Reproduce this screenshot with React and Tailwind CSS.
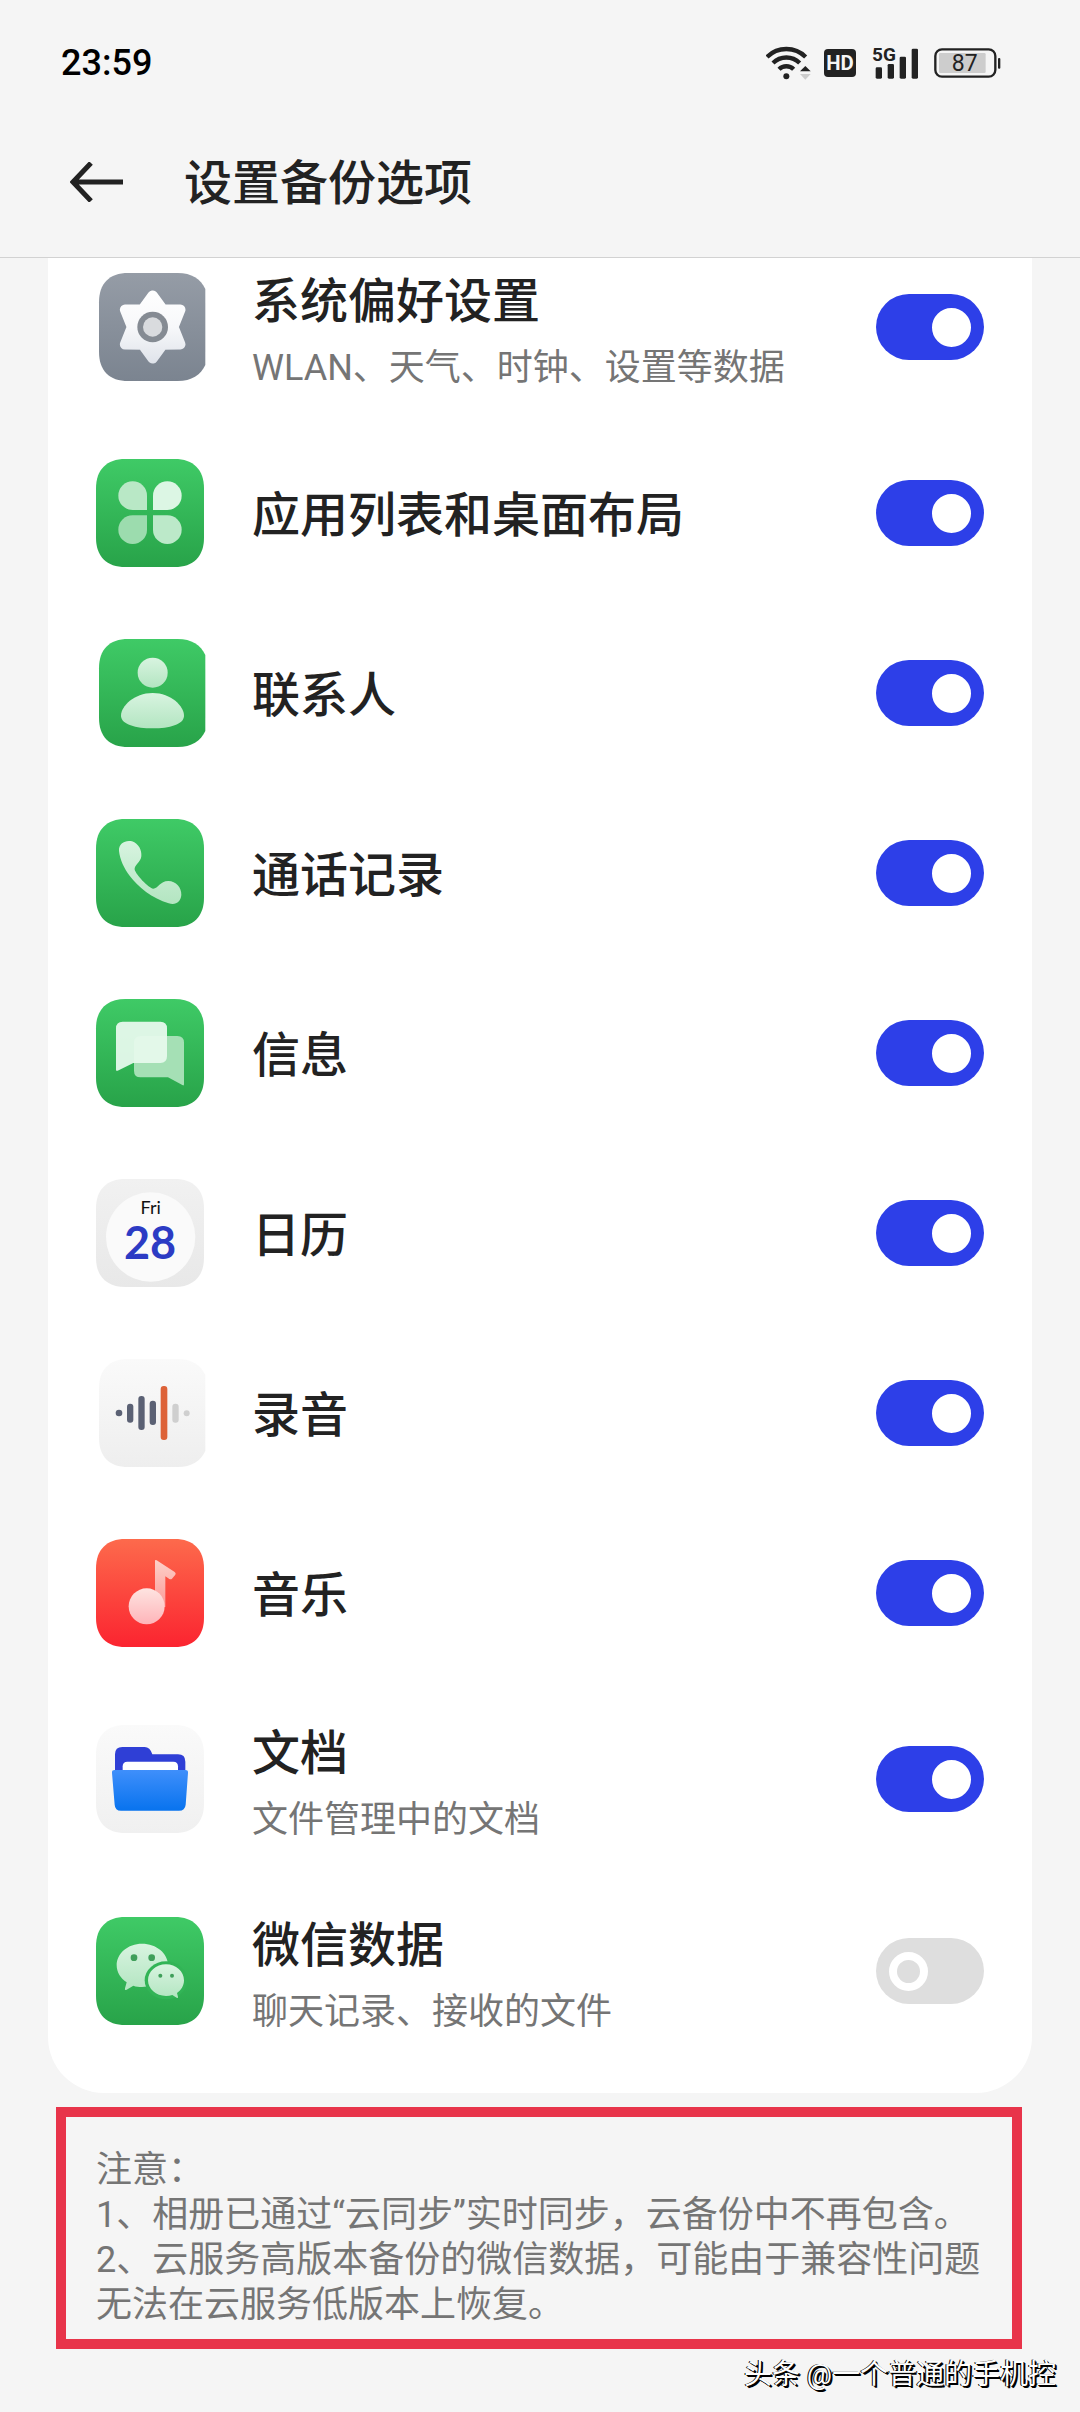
import React from "react";

/* App icons share a 324-unit canvas: three units to one CSS pixel. */
function Tile({ id, from, to, inset = false, children }) {
  return (
    <svg viewBox="0 0 324 324" className="size-[108px] shrink-0 overflow-visible" aria-hidden="true">
      <defs>
        <linearGradient id={id} x1="0" y1="0" x2="0" y2="1">
          <stop offset="0" stopColor={from} />
          <stop offset="1" stopColor={to} />
        </linearGradient>
        <linearGradient id={id + "-mint"} x1="0" y1="0" x2="0" y2="1">
          <stop offset="0" stopColor="#d8f4e0" />
          <stop offset="1" stopColor="#b3e5c1" />
        </linearGradient>
      </defs>
      {inset ? (
        <path
          d="M97 0H245C287 0 314 18 328 48V276C314 306 287 324 245 324H97C39 324 9 292 9 236V88C9 32 39 0 97 0Z"
          fill={`url(#${id})`}
        />
      ) : (
        <path
          d="M88 0H236C292 0 324 32 324 88V236C324 292 292 324 236 324H88C32 324 0 292 0 236V88C0 32 32 0 88 0Z"
          fill={`url(#${id})`}
        />
      )}
      {children}
    </svg>
  );
}

const GREEN = { from: "#3fca66", to: "#28a349" };

const SettingsIcon = () => (
  <Tile id="settings" from="#959ca6" to="#7b8490" inset>
    <defs>
      <linearGradient id="gear" gradientUnits="userSpaceOnUse" x1="0" y1="52" x2="0" y2="272">
        <stop offset="0" stopColor="#ffffff" />
        <stop offset="0.5" stopColor="#f7f8fa" />
        <stop offset="1" stopColor="#dfe3ea" />
      </linearGradient>
    </defs>
    <path
      d="M170 68L200 109L253 110L232 162L253 214L200 215L170 256L140 215L87 214L108 162L87 110L140 109Z"
      fill="url(#gear)"
      stroke="url(#gear)"
      strokeWidth="31"
      strokeLinejoin="round"
    />
    <circle cx="170" cy="162" r="46" fill="#858b93" />
    <circle cx="170" cy="162" r="29" fill="#d9dbde" />
  </Tile>
);

const AppsIcon = () => (
  <Tile id="apps" {...GREEN}>
    <path d="M153 153H110A43 43 0 1 1 153 110Z" fill="#b9e8c6" />
    <path d="M171 153V110A43 43 0 1 1 214 153Z" fill="#dcf6e4" />
    <path d="M153 169V212A43 43 0 1 1 110 169Z" fill="#9cdcae" />
    <path d="M171 169H214A43 43 0 1 1 171 212Z" fill="#bce9c9" />
  </Tile>
);

const ContactsIcon = () => (
  <Tile id="contacts" {...GREEN} inset>
    <circle cx="170" cy="101" r="45" fill="url(#contacts-mint)" />
    <path
      d="M170 162C226 162 264 202 264 230C264 256 220 268 170 268C120 268 75 256 75 230C75 202 114 162 170 162Z"
      fill="url(#contacts-mint)"
    />
  </Tile>
);

const PhoneIcon = () => (
  <Tile id="phone" {...GREEN}>
    <path
      d="M69 96C67 72 90 62 108 67C128 73 138 95 136 112C134 131 114 138 116 152C120 166 156 206 172 209C186 209 192 186 217 186C240 186 257 206 256 228C254 249 240 259 218 253C170 240 124 202 102 172C84 148 72 122 69 96Z"
      fill="url(#phone-mint)"
    />
  </Tile>
);

const MessagesIcon = () => (
  <Tile id="messages" {...GREEN}>
    <path
      d="M134 111H244Q264 111 264 131V256Q264 261 259 258L216 235H134Q114 235 114 215V131Q114 111 134 111Z"
      fill="#a5e0b5"
    />
    <path
      d="M80 68H193Q213 68 213 88V172Q213 192 193 192H112L65 215Q60 217 60 212V88Q60 68 80 68Z"
      fill="#e6f9ec"
      fillOpacity="0.95"
    />
  </Tile>
);

const CalendarIcon = () => (
  <Tile id="calendar" from="#f1f1f1" to="#e8e8e8">
    <circle cx="164" cy="174" r="134" fill="#fafafa" />
    <text x="164" y="106" textAnchor="middle" fontFamily="Lato, sans-serif" fontSize="54" fill="#111111">
      Fri
    </text>
    <text x="162" y="240" textAnchor="middle" fontFamily="Lato, sans-serif" fontSize="135" fontWeight="700" fill="#2c3bc4">
      28
    </text>
  </Tile>
);

const RecorderIcon = () => (
  <Tile id="recorder" from="#fafafa" to="#eeeeee" inset>
    <g fill="#5b6174">
      <circle cx="69" cy="162" r="10" />
      <rect x="93" y="134" width="19" height="57" rx="9" />
      <rect x="127" y="111" width="19" height="102" rx="9" />
      <rect x="161" y="125" width="19" height="73" rx="9" />
    </g>
    <rect x="194" y="81" width="20" height="162" rx="9" fill="#dd6238" />
    <g fill="#cfcfcf">
      <rect x="229" y="134" width="19" height="57" rx="9" />
      <circle cx="272" cy="163" r="9" />
    </g>
  </Tile>
);

const MusicIcon = () => (
  <Tile id="music" from="#fd6a4c" to="#fb2430">
    <defs>
      <linearGradient id="music-head" x1="0" y1="0" x2="0" y2="1">
        <stop offset="0" stopColor="#fee4e1" />
        <stop offset="1" stopColor="#feb4b9" />
      </linearGradient>
      <linearGradient id="music-stem" x1="0" y1="0" x2="0" y2="1">
        <stop offset="0" stopColor="#fdd0c8" />
        <stop offset="1" stopColor="#fc9a98" />
      </linearGradient>
    </defs>
    <path d="M177 66Q177 61 182 64L236 99Q241 103 238 107L228 119Q225 122 220 120L208 112V204H177Z" fill="url(#music-stem)" />
    <circle cx="152" cy="202" r="54" fill="url(#music-head)" />
  </Tile>
);

const FilesIcon = () => (
  <Tile id="files" from="#fafafa" to="#f0f0f0">
    <defs>
      <linearGradient id="files-front" x1="0" y1="0" x2="0" y2="1">
        <stop offset="0" stopColor="#3f8ffb" />
        <stop offset="1" stopColor="#0873ee" />
      </linearGradient>
    </defs>
    <path d="M57 150V88Q57 66 79 66H146Q162 66 169 88H246Q268 88 268 110V150Z" fill="#2f3fd6" />
    <path d="M80 150V124Q80 110 94 110H232Q246 110 246 124V150Z" fill="#ffffff" />
    <path d="M56 135H268Q277 135 276 144L269 239Q267 257 249 257H75Q57 257 56 239L48 144Q47 135 56 135Z" fill="url(#files-front)" />
  </Tile>
);

const WeChatIcon = () => (
  <Tile id="wechat" {...GREEN}>
    <path
      d="M138 80C181 80 216 109 216 145C216 181 181 210 138 210C129 210 120 209 112 206L92 218Q85 222 87 214L92 196C74 184 62 166 62 145C62 109 96 80 138 80Z"
      fill="url(#wechat-mint)"
    />
    <ellipse cx="210" cy="190" rx="64" ry="57" fill="#32b456" />
    <path
      d="M210 142C240 142 264 163 264 190C264 206 256 219 243 228L246 240Q246 245 242 242L229 234C223 236 217 237 210 237C180 237 156 216 156 190C156 163 180 142 210 142Z"
      fill="url(#wechat-mint)"
    />
    <g fill="#3f9f5a">
      <circle cx="114" cy="122" r="10" />
      <circle cx="167" cy="122" r="10" />
      <circle cx="193" cy="176" r="6" />
      <circle cx="228" cy="176" r="6" />
    </g>
  </Tile>
);

const OPTIONS = [
  { key: "system", title: "系统偏好设置", note: "WLAN、天气、时钟、设置等数据", Icon: SettingsIcon, on: true },
  { key: "layout", title: "应用列表和桌面布局", Icon: AppsIcon, on: true },
  { key: "contacts", title: "联系人", Icon: ContactsIcon, on: true },
  { key: "calls", title: "通话记录", Icon: PhoneIcon, on: true },
  { key: "sms", title: "信息", Icon: MessagesIcon, on: true },
  { key: "calendar", title: "日历", Icon: CalendarIcon, on: true },
  { key: "recordings", title: "录音", Icon: RecorderIcon, on: true },
  { key: "music", title: "音乐", Icon: MusicIcon, on: true },
  { key: "files", title: "文档", note: "文件管理中的文档", Icon: FilesIcon, on: true },
  { key: "wechat", title: "微信数据", note: "聊天记录、接收的文件", Icon: WeChatIcon, on: false },
];

function OptionRow({ title, note, Icon, on }) {
  return (
    <li>
      <label className={`flex items-center gap-12 px-12 ${note ? "h-48" : "h-[180px]"}`}>
        <Icon />
        <span className="flex min-w-0 flex-1 flex-col pt-1.5">
          <span className="text-[48px] leading-[76px] font-medium text-[#222222]">{title}</span>
          {note && <span className="text-[36px] leading-[56px] text-[#757575]">{note}</span>}
        </span>
        <input
          type="checkbox"
          role="switch"
          defaultChecked={on}
          className="flex h-[66px] w-[108px] shrink-0 appearance-none items-center rounded-full bg-[#dedede] px-[13px] before:size-[39px] before:rounded-full before:border-8 before:border-white before:content-[''] checked:justify-end checked:bg-[#2d3fe8] checked:before:bg-white"
        />
      </label>
    </li>
  );
}

function StatusBar() {
  return (
    <div className="flex h-[126px] items-center justify-between pr-[79px] pl-[61px]">
      <time className="text-[36px] leading-none font-medium text-black">23:59</time>
      <div className="flex items-center gap-[13px] text-[#222222]">
        <svg viewBox="0 0 135 102" className="h-[34px] w-[45px]" aria-label="Wi-Fi">
          <g fill="none" stroke="currentColor" strokeWidth="13">
            <path d="M3 33A82 82 0 0 1 119 33" />
            <path d="M21 51A57 57 0 0 1 101 51" />
            <path d="M39 70A31 31 0 0 1 83 70" />
          </g>
          <circle cx="61" cy="91" r="9" fill="currentColor" />
          <path d="M118 60L134 76H102Z" fill="currentColor" />
          <path d="M102 84H134L118 101Z" fill="#cccccc" />
        </svg>
        <svg viewBox="0 0 96 84" className="h-7 w-8" aria-label="HD">
          <rect width="96" height="84" rx="12" fill="currentColor" />
          <text x="48" y="64" textAnchor="middle" fontFamily="Roboto, sans-serif" fontSize="61" fontWeight="700" fill="#f5f5f5">
            HD
          </text>
        </svg>
        <svg viewBox="0 0 138 102" className="ml-[3px] h-[34px] w-[46px] overflow-visible" aria-label="5G">
          <text x="0" y="46" fontFamily="Roboto, sans-serif" fontSize="57" fontWeight="700" fill="currentColor">
            5G
          </text>
          <g fill="currentColor">
            <rect x="11" y="64" width="19" height="34" rx="4" />
            <rect x="47" y="54" width="19" height="44" rx="4" />
            <rect x="83" y="32" width="19" height="66" rx="4" />
            <rect x="119" y="8" width="19" height="90" rx="4" />
          </g>
        </svg>
        <svg viewBox="0 0 201 90" className="ml-[3px] h-[30px] w-[67px]" aria-label="87%">
          <rect x="4" y="4" width="180" height="82" rx="20" fill="none" stroke="currentColor" strokeWidth="7" />
          <rect x="15" y="15" width="140" height="60" rx="4" fill="#cdcdcd" />
          <rect x="192" y="30" width="7" height="32" rx="3" fill="currentColor" />
          <text x="92" y="70" textAnchor="middle" fontFamily="Roboto, sans-serif" fontSize="69" fill="currentColor">
            87
          </text>
        </svg>
      </div>
    </div>
  );
}

export default function App() {
  return (
    <div className="flex min-h-screen flex-col bg-[#f5f5f5] font-['Roboto','Noto_Sans_CJK_SC',sans-serif]" lang="zh-CN">
      <header className="border-b border-[#d2d2d2]">
        <StatusBar />
        <div className="flex h-[131px] items-center gap-[61px] pr-12 pb-5 pl-[70px]">
          <button type="button" aria-label="返回" className="text-[#222222]">
            <svg viewBox="0 0 53 40" className="h-10 w-[53px]" fill="none" stroke="currentColor" strokeWidth="5">
              <path d="M53 20H3M21 1L3 20L21 39" />
            </svg>
          </button>
          <h1 className="pt-1 text-[48px] leading-[76px] font-medium text-[#222222]">设置备份选项</h1>
        </div>
      </header>

      <main className="overflow-hidden px-12">
        <ul className="-mt-[27px] rounded-b-[56px] bg-white pb-[26px]">
          {OPTIONS.map(({ key, ...option }) => (
            <OptionRow key={key} {...option} />
          ))}
        </ul>
        <section className="mr-2.5 ml-2 mt-3.5 border-10 border-[#e8344a] pt-[31px] pr-6 pb-[11px] pl-[30px] text-[36px] leading-[45px] text-[#757575]">
          <p>注意：</p>
          <p>1、相册已通过“云同步”实时同步，云备份中不再包含。</p>
          <p>2、云服务高版本备份的微信数据，可能由于兼容性问题无法在云服务低版本上恢复。</p>
        </section>
      </main>

      <footer className="mt-2 flex justify-end pr-6 text-[28px] leading-[36px] text-white [text-shadow:1px_1px_0_#000,2px_2px_0_#000,-1px_0_0_#000]">
        头条 @一个普通的手机控
      </footer>
    </div>
  );
}
